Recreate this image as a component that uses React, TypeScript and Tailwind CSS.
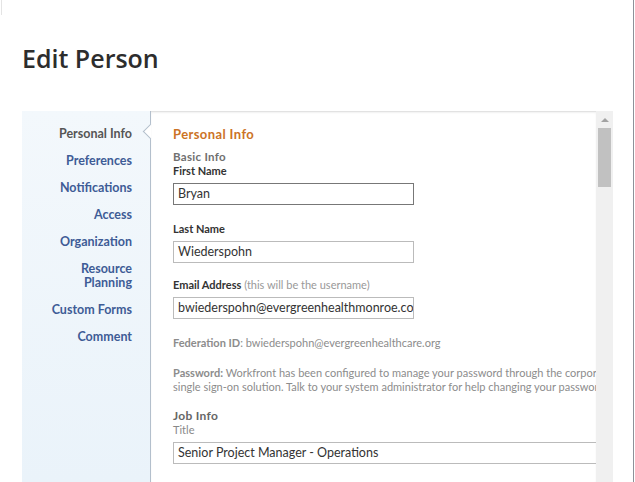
import React from "react";

const navItems = [
  "Preferences",
  "Notifications",
  "Access",
  "Organization",
  "Resource Planning",
  "Custom Forms",
  "Comment",
];

function Field({
  label,
  hint,
  value,
  focused,
}: {
  label: string;
  hint?: string;
  value: string;
  focused?: boolean;
}) {
  return (
    <div>
      <div className="text-[11px] leading-[14px] font-bold text-[#333]">
        {label}
        {hint && <span className="font-normal text-[#999]"> {hint}</span>}
      </div>
      <div
        className={`mt-[5px] h-[22px] w-[241px] overflow-hidden whitespace-nowrap border px-[4px] text-[12.5px] leading-[20px] text-[#333] ${
          focused ? "border-[#777]" : "border-[#bbb]"
        }`}
      >
        {value}
      </div>
    </div>
  );
}

export default function App() {
  return (
    <div
      className="relative flex h-[482px] w-[635px] overflow-hidden bg-white"
      style={{ fontFamily: "Lato, 'Open Sans', sans-serif" }}
    >
      <div className="absolute left-[1px] top-0 h-[15px] w-px bg-[#e4e4e4]" />
      <div className="flex w-[633px] flex-col">
        <h1
          className="ml-[22px] mt-[40px] text-[25px] leading-[36px] font-semibold text-[#2d2d2d]"
          style={{ fontFamily: "'Open Sans', sans-serif" }}
        >
          Edit Person
        </h1>

        <div className="ml-[22px] mt-[35px] flex h-[371px] w-[591px]">
          {/* Sidebar */}
          <div className="w-[128px] shrink-0 bg-gradient-to-b from-[#f3f8fc] to-[#eaf3fa] pr-[18px] pt-[16px] text-right text-[12.5px] leading-[14px] font-bold">
            <div className="text-[#555]">Personal Info</div>
            {navItems.map((item) => (
              <div key={item} className="mt-[13px] text-[#3e5c96]">
                {item === "Resource Planning" ? (
                  <>
                    Resource
                    <br />
                    Planning
                  </>
                ) : (
                  item
                )}
              </div>
            ))}
          </div>

          {/* Content */}
          <div className="relative flex min-w-0 flex-1 border-l border-[#b3bfcc]">
            <div className="absolute left-[-6px] top-[15px] h-[11px] w-[11px] rotate-45 border-b border-l border-[#b3bfcc] bg-white" />
            <div className="relative min-w-0 flex-1 overflow-hidden border-t border-[#e2e2e2] pl-[22px] pt-[14px] shadow-[inset_0_1px_2px_rgba(0,0,0,0.06)]">
              <div className="text-[13px] leading-[16px] font-bold tracking-[0.4px] text-[#cc7326]">
                Personal Info
              </div>
              <div className="mt-[8px] text-[11.5px] leading-[14px] font-bold tracking-[0.3px] text-[#707070]">
                Basic Info
              </div>
              <Field label="First Name" value="Bryan" focused />
              <div className="mt-[17px]">
                <Field label="Last Name" value="Wiederspohn" />
              </div>
              <div className="mt-[15px]">
                <Field
                  label="Email Address"
                  hint="(this will be the username)"
                  value="bwiederspohn@evergreenhealthmonroe.com"
                />
              </div>
              <div className="mt-[17px] whitespace-nowrap text-[11px] leading-[14px] text-[#8c8c8c]">
                <span className="font-bold">Federation ID</span>: bwiederspohn@evergreenhealthcare.org
              </div>
              <div className="mt-[16px] whitespace-nowrap text-[11px] leading-[14px] text-[#8c8c8c]">
                <span className="font-bold">Password:</span> Workfront has been configured to manage your password through the corporate
                <br />
                single sign-on solution. Talk to your system administrator for help changing your password.
              </div>
              <div className="mt-[15px] text-[12px] leading-[14px] font-bold tracking-[0.3px] text-[#666]">
                Job Info
              </div>
              <div className="text-[11px] leading-[14px] text-[#888]">Title</div>
              <div className="mt-[5px] h-[22px] w-[500px] overflow-hidden whitespace-nowrap border border-[#bbb] px-[4px] text-[12.5px] leading-[20px] text-[#333]">
                Senior Project Manager - Operations
              </div>
            </div>

            {/* Scrollbar */}
            <div className="flex w-[17px] shrink-0 flex-col items-center bg-[#f0f0f0]">
              <div className="mt-[7px] h-0 w-0 border-x-[4px] border-b-[4px] border-x-transparent border-b-[#a3a3a3]" />
              <div className="mt-[6px] h-[59px] w-[13px] bg-[#c1c1c1]" />
            </div>
          </div>
        </div>
      </div>
      <div className="w-px bg-[#8d9199]" />
      <div className="w-px bg-white" />
    </div>
  );
}
